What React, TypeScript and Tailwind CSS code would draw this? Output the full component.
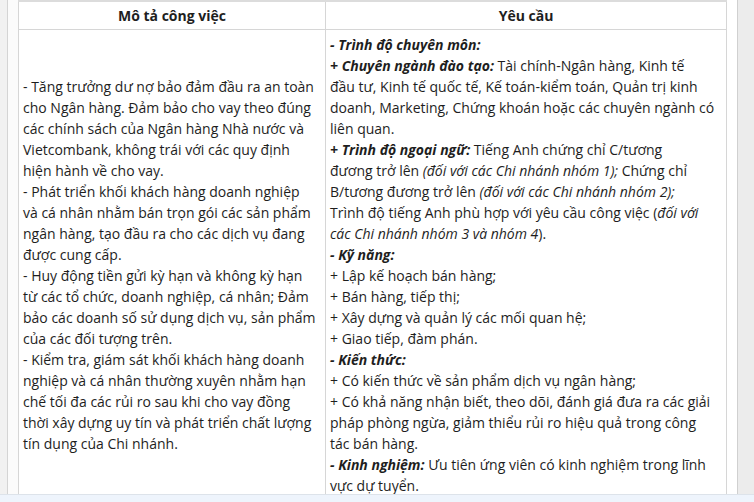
import React from "react";

const leftLines = [
  "- Tăng trưởng dư nợ bảo đảm đầu ra an toàn",
  "cho Ngân hàng. Đảm bảo cho vay theo đúng",
  "các chính sách của Ngân hàng Nhà nước và",
  "Vietcombank, không trái với các quy định",
  "hiện hành về cho vay.",
  "- Phát triển khối khách hàng doanh nghiệp",
  "và cá nhân nhằm bán trọn gói các sản phẩm",
  "ngân hàng, tạo đầu ra cho các dịch vụ đang",
  "được cung cấp.",
  "- Huy động tiền gửi kỳ hạn và không kỳ hạn",
  "từ các tổ chức, doanh nghiệp, cá nhân; Đảm",
  "bảo các doanh số sử dụng dịch vụ, sản phẩm",
  "của các đối tượng trên.",
  "- Kiểm tra, giám sát khối khách hàng doanh",
  "nghiệp và cá nhân thường xuyên nhằm hạn",
  "chế tối đa các rủi ro sau khi cho vay đồng",
  "thời xây dựng uy tín và phát triển chất lượng",
  "tín dụng của Chi nhánh.",
];

function B({ children }: { children: React.ReactNode }) {
  return <b className="font-bold italic">{children}</b>;
}

function I({ children }: { children: React.ReactNode }) {
  return <i className="italic">{children}</i>;
}

const rightLines: React.ReactNode[] = [
  <B>- Trình độ chuyên môn:</B>,
  <>
    <B>+ Chuyên ngành đào tạo:</B> Tài chính-Ngân hàng, Kinh tế
  </>,
  "đầu tư, Kinh tế quốc tế, Kế toán-kiểm toán, Quản trị kinh",
  "doanh, Marketing, Chứng khoán hoặc các chuyên ngành có",
  "liên quan.",
  <>
    <B>+ Trình độ ngoại ngữ:</B> Tiếng Anh chứng chỉ C/tương
  </>,
  <>
    đương trở lên <I>(đối với các Chi nhánh nhóm 1);</I> Chứng chỉ
  </>,
  <>
    B/tương đương trở lên <I>(đối với các Chi nhánh nhóm 2);</I>
  </>,
  <>
    Trình độ tiếng Anh phù hợp với yêu cầu công việc (<I>đối với</I>
  </>,
  <>
    <I>các Chi nhánh nhóm 3 và nhóm 4</I>).
  </>,
  <B>- Kỹ năng:</B>,
  "+ Lập kế hoạch bán hàng;",
  "+ Bán hàng, tiếp thị;",
  "+ Xây dựng và quản lý các mối quan hệ;",
  "+ Giao tiếp, đàm phán.",
  <B>- Kiến thức:</B>,
  "+ Có kiến thức về sản phẩm dịch vụ ngân hàng;",
  "+ Có khả năng nhận biết, theo dõi, đánh giá đưa ra các giải",
  "pháp phòng ngừa, giảm thiểu rủi ro hiệu quả trong công",
  "tác bán hàng.",
  <>
    <B>- Kinh nghiệm:</B> Ưu tiên ứng viên có kinh nghiệm trong lĩnh
  </>,
  "vực dự tuyển.",
];

export default function App() {
  return (
    <div className="flex h-[502px] w-[754px] flex-col overflow-hidden bg-white font-['Open_Sans','Noto_Sans',sans-serif] text-[14px] leading-[21px] text-[#1e1e1e]">
      <div className="flex min-h-0 flex-1">
        <div className="w-[7px] shrink-0 bg-[#f1f1f1]" />
        <div className="w-[11px] shrink-0 border-l border-[#d4d4d4] bg-[#fbfbfb]" />
        <div className="min-h-0 flex-1 border-t-2 border-[#dcdcdc]">
          <table className="w-[708px] table-fixed border-collapse">
            <colgroup>
              <col className="w-[307px]" />
              <col className="w-[401px]" />
            </colgroup>
            <thead>
              <tr className="h-[27px]">
                <th className="border border-t-0 border-[#d6d6d6] text-center font-bold">
                  Mô tả công việc
                </th>
                <th className="border border-t-0 border-[#d6d6d6] text-center font-bold">
                  Yêu cầu
                </th>
              </tr>
            </thead>
            <tbody>
              <tr>
                <td className="border border-[#d6d6d6] px-[4px] align-middle whitespace-nowrap">
                  {leftLines.map((l, i) => (
                    <div key={i}>{l}</div>
                  ))}
                </td>
                <td className="border border-[#d6d6d6] px-[4px] pt-[4px] pb-[4px] align-top whitespace-nowrap">
                  {rightLines.map((l, i) => (
                    <div key={i}>{l}</div>
                  ))}
                </td>
              </tr>
            </tbody>
          </table>
        </div>
        <div className="w-[10px] shrink-0 bg-white" />
        <div className="w-[19px] shrink-0 border-l border-[#d0d0d0] bg-[#ececec]" />
      </div>
      <div className="h-[8px] shrink-0 border-t border-[#dde3ea] bg-[#eef4fc]" />
    </div>
  );
}
